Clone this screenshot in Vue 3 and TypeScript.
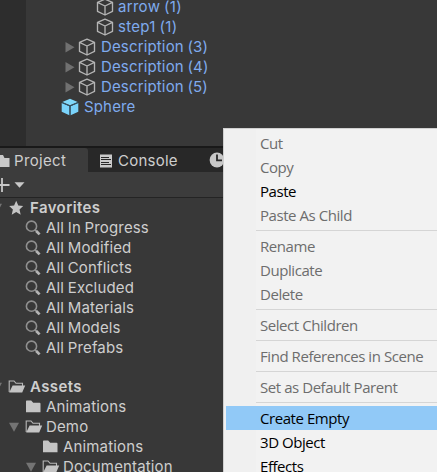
<script setup lang="ts">
interface TreeRow {
  label: string
  indent: number
  icon: 'cube' | 'prefab' | 'search' | 'star' | 'folder' | 'open'
  arrow?: 'right' | 'down'
  bold?: boolean
}
interface MenuItem {
  label: string
  state?: 'enabled' | 'active'
}

const hierarchy: TreeRow[] = [
  { label: 'arrow (1)', indent: 4, icon: 'cube' },
  { label: 'step1 (1)', indent: 4, icon: 'cube' },
  { label: 'Description (3)', indent: 3, icon: 'cube', arrow: 'right' },
  { label: 'Description (4)', indent: 3, icon: 'cube', arrow: 'right' },
  { label: 'Description (5)', indent: 3, icon: 'cube', arrow: 'right' },
  { label: 'Sphere', indent: 2, icon: 'prefab' },
]

const favorites: TreeRow[] = [
  { label: 'Favorites', indent: 0, icon: 'star', arrow: 'down', bold: true },
  ...['In Progress', 'Modified', 'Conflicts', 'Excluded', 'Materials', 'Models', 'Prefabs'].map(
    (name): TreeRow => ({ label: `All ${name}`, indent: 1, icon: 'search' }),
  ),
]

const assets: TreeRow[] = [
  { label: 'Assets', indent: 0, icon: 'open', arrow: 'down', bold: true },
  { label: 'Animations', indent: 1, icon: 'folder' },
  { label: 'Demo', indent: 1, icon: 'open', arrow: 'down' },
  { label: 'Animations', indent: 2, icon: 'folder' },
  { label: 'Documentation', indent: 2, icon: 'open', arrow: 'down' },
]

const menu: MenuItem[][] = [
  [{ label: 'Cut' }, { label: 'Copy' }, { label: 'Paste', state: 'enabled' }, { label: 'Paste As Child' }],
  [{ label: 'Rename' }, { label: 'Duplicate' }, { label: 'Delete' }],
  [{ label: 'Select Children' }],
  [{ label: 'Find References in Scene' }],
  [{ label: 'Set as Default Parent' }],
  [
    { label: 'Create Empty', state: 'active' },
    { label: '3D Object', state: 'enabled' },
    { label: 'Effects', state: 'enabled' },
  ],
]
</script>

<template>
  <main class="editor">
    <section class="hierarchy">
      <div class="gutter"></div>
      <ul class="tree links">
        <li v-for="row in hierarchy" :key="row.label" class="row" :class="'h' + row.indent">
          <span class="fold"><svg v-if="row.arrow" width="10" height="12" viewBox="0 0 10 12"><path d="M.5 1 9.5 6.2.5 11.4z" fill="#707070" /></svg></span>
          <svg v-if="row.icon === 'cube'" class="cube" width="18" height="18" viewBox="0 0 18 18">
            <path d="M9 1.2 16.5 4.4V13.4L9 17 1.5 13.4V4.4zM1.5 4.4 9 8 16.5 4.4M9 8V17" fill="none" stroke="#b4b4b4" stroke-width="1.35" stroke-linejoin="round" />
          </svg>
          <svg v-else class="cube" width="18" height="18" viewBox="0 0 18 18">
            <path d="M9 .7 16.7 4 9 7.3 1.3 4z" fill="#80d8fb" />
            <path d="M.7 5 8.4 8.3V17.2L.7 13.7zM17.3 5 9.6 8.3V17.2L17.3 13.7z" fill="#7ad3fb" />
            <path d="M.9 4.5 9 8 17.1 4.5M9 8V17.3" fill="none" stroke="#315369" stroke-width="1" />
          </svg>
          <span class="label">{{ row.label }}</span>
        </li>
      </ul>
    </section>

    <section class="project">
      <header class="tabs">
        <div class="tab current">
          <svg class="tab-folder" width="10" height="14" viewBox="0 0 10 14"><path d="M0 1H3L4.5 4H9.5V13H0z" fill="#c8c8c8" /></svg>
          <span>Project</span>
        </div>
        <div class="tab console">
          <svg width="12" height="14" viewBox="0 0 12 14">
            <path d="M0 .5H12V13.5H0z" fill="#cacaca" />
            <path d="M1 3.5H9M1 5.5H11M1 8.5H9M1 10.5H11" stroke="#282828" stroke-width="1" />
          </svg>
          <span>Console</span>
        </div>
        <svg class="clock" width="16" height="16" viewBox="0 0 16 16">
          <circle cx="8" cy="8" r="7.4" fill="#c8c8c8" />
          <path d="M8 2.5V8.4H13" fill="none" stroke="#282828" stroke-width="1.8" />
        </svg>
      </header>
      <div class="toolbar">
        <svg width="28" height="16" viewBox="0 0 28 16">
          <path d="M2 1V15M-5 8H9.5" stroke="#c8c8c8" stroke-width="1.8" />
          <path d="M14.5 5.2H24.5L19.5 10.7z" fill="#c8c8c8" />
        </svg>
      </div>
      <ul v-for="(rows, i) in [favorites, assets]" :key="i" class="tree files">
        <li v-for="(row, j) in rows" :key="j" class="row" :class="['p' + row.indent, { bold: row.bold }]">
          <span class="fold"><svg v-if="row.arrow" width="12" height="12" viewBox="0 0 12 12"><path d="M1 1.8H11L6 10.8z" fill="#747474" /></svg></span>
          <svg v-if="row.icon === 'star'" class="icon" width="18" height="16" viewBox="0 0 18 16"><path d="M8.2.8 10.3 5.4 15.2 6 11.5 9.4 12.7 14.7 8.2 12 3.7 14.7 4.9 9.4 1.2 6 6.1 5.4z" fill="#c4c4c4" /></svg>
          <svg v-else-if="row.icon === 'search'" class="icon" width="18" height="16" viewBox="0 0 18 16">
            <circle cx="6.5" cy="6.2" r="5.1" fill="none" stroke="#8f8f8f" stroke-width="1.6" />
            <path d="M10.2 10 12 11.8" stroke="#999" stroke-width="1.6" />
            <path d="M11.2 11 14.6 14.4" stroke="#b4b4b4" stroke-width="2.7" />
          </svg>
          <svg v-else-if="row.icon === 'folder'" class="icon" width="18" height="16" viewBox="0 0 18 16"><path d="M1 2.2Q1 1.5 1.7 1.5H6.2L8.2 3.8H14.5Q15.5 3.8 15.5 4.8V13.3H1z" fill="#c4c4c4" /></svg>
          <svg v-else class="icon" width="18" height="16" viewBox="0 0 18 16">
            <path d="M1.2 13V2H6L8 4.3H14.5V7" fill="none" stroke="#b8b8b8" stroke-width="1.1" />
            <path d="M4.6 6.4H17.2L14.2 13.4H1.2z" fill="#c4c4c4" />
          </svg>
          <span class="label">{{ row.label }}</span>
        </li>
      </ul>
    </section>

    <nav class="context-menu">
      <ul v-for="(group, i) in menu" :key="i" class="group">
        <li v-for="item in group" :key="item.label" class="item" :class="item.state"><span>{{ item.label }}</span></li>
      </ul>
    </nav>
  </main>
</template>

<style>
body {
  overflow: hidden;
}
</style>

<style scoped>
.editor {
  position: relative;
  width: 437px;
  height: 472px;
  overflow: hidden;
  background: #383838;
  color: #cecece;
  font: 15px/20px Inter, 'Liberation Sans', sans-serif;
  letter-spacing: 0.35px;
  white-space: nowrap;
}
ul {
  margin: 0;
  padding: 0;
  list-style: none;
}
svg {
  display: block;
  flex: none;
}
.hierarchy {
  display: flex;
  height: 146px;
  border-bottom: 2px solid #191919;
}
.gutter {
  width: 26px;
  background: #2d2d2d;
}
.links {
  margin-top: -3px;
  color: #7fabee;
}
.row {
  display: flex;
  align-items: center;
  height: 20px;
  letter-spacing: 0.15px;
  word-spacing: -0.7px;
}
.fold {
  display: flex;
  justify-content: center;
  flex: none;
  width: 12px;
}
.cube {
  margin: 0 5px 0 2px;
}
.links .label {
  margin-left: -1px;
}
.h2 {
  padding-left: 21px;
}
.h2 .cube {
  margin-right: 6px;
}
.h3 {
  padding-left: 38px;
}
.h3 .cube {
  margin-right: 6px;
}
.h4 {
  padding-left: 56px;
  letter-spacing: 0.3px;
}
.tabs {
  display: flex;
  align-items: center;
  height: 24px;
  background: #282828;
}
.tab {
  display: flex;
  align-items: center;
  box-sizing: border-box;
  height: 24px;
  padding-top: 1px;
}
.current {
  width: 88px;
  gap: 4px;
  border-top-right-radius: 3px;
  background: #3c3c3c;
}
.console {
  width: 121px;
  gap: 6px;
  padding-left: 12px;
  letter-spacing: 0.25px;
}
.toolbar {
  display: flex;
  align-items: center;
  height: 25px;
  border-bottom: 1px solid #242424;
  background: #3c3c3c;
}
.files + .files {
  margin-top: 19px;
}
.p0 {
  margin-left: -9px;
}
.p1 {
  padding-left: 8px;
}
.p2 {
  padding-left: 25px;
}
.icon {
  margin: 0 3px 0 5px;
}
.p0 .label {
  margin-left: 1px;
}
.bold {
  font-weight: 600;
  letter-spacing: 0.4px;
}
.context-menu {
  position: absolute;
  top: 128px;
  left: 223px;
  width: 250px;
  height: 360px;
  padding: 2px 0 0 2px;
  border: solid #d0d0d0;
  border-width: 1px 0 0 1px;
  background: linear-gradient(to right, #f0f0f0 32px, #f2f2f2 32px);
  color: #6d6d6d;
  font: 15px/24px 'Open Sans', 'Noto Sans', sans-serif;
  letter-spacing: -0.44px;
}
.group + .group::before {
  content: '';
  display: block;
  height: 1px;
  margin: 3px 0 3px 30px;
  background: #d5d5d5;
}
.item {
  height: 24px;
  padding-left: 34px;
}
.enabled,
.active {
  color: #000;
}
.active {
  background: #91c9f7;
}
</style>
